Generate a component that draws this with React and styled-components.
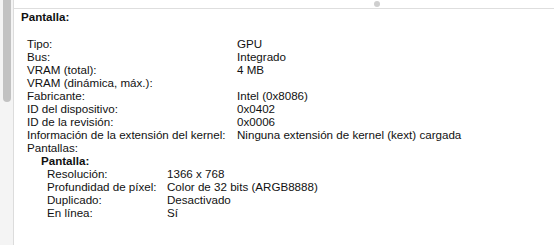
import React from "react";
import styled, { createGlobalStyle } from "styled-components";

const Global = createGlobalStyle`
  html, body { margin: 0; padding: 0; background: #fff; }
  body { font-family: "Liberation Sans", Arial, sans-serif; }
`;

const Frame = styled.div`
  display: flex;
  width: 554px;
  height: 245px;
  overflow: hidden;
  background: #fff;
`;

const Gutter = styled.div`
  width: 14px;
  flex-shrink: 0;
  background: #f4f4f4;
  border-right: 1px solid #dcdcdc;
  padding: 0 3px 0 3px;
  box-sizing: border-box;
`;

const Thumb = styled.div`
  width: 8px;
  height: 102px;
  background: #c2c2c2;
  border-radius: 0 0 4px 4px;
`;

const Main = styled.div`
  flex: 1;
  display: flex;
  flex-direction: column;
`;

const Splitter = styled.div`
  height: 9px;
  flex-shrink: 0;
  border-bottom: 1px solid #dedede;
  display: flex;
  padding-left: 360px;
  box-sizing: border-box;
`;

const Dot = styled.div`
  width: 6px;
  height: 6px;
  margin-top: 1px;
  border-radius: 50%;
  background: #cfcfcf;
`;

const Content = styled.div`
  padding: 1px 0 0 7px;
  color: #111;
  font-size: 11.6px;
  line-height: 13px;
`;

const Title = styled.div`
  font-weight: bold;
  margin-bottom: 14px;
`;

const Table = styled.div`
  display: grid;
  grid-template-columns: ${p => p.$label}px auto;
  padding-left: ${p => p.$indent}px;
`;

const Label = styled.div`
  white-space: nowrap;
`;

const Value = styled.div`
  white-space: nowrap;
`;

const Heading = styled.div`
  grid-column: 1 / -1;
  font-weight: ${p => (p.$bold ? "bold" : "normal")};
  padding-left: ${p => p.$indent || 0}px;
`;

const main = [
  ["Tipo:", "GPU"],
  ["Bus:", "Integrado"],
  ["VRAM (total):", "4 MB"],
  ["VRAM (dinámica, máx.):", ""],
  ["Fabricante:", "Intel (0x8086)"],
  ["ID del dispositivo:", "0x0402"],
  ["ID de la revisión:", "0x0006"],
  ["Información de la extensión del kernel:", "Ninguna extensión de kernel (kext) cargada"],
];

const screen = [
  ["Resolución:", "1366 x 768"],
  ["Profundidad de píxel:", "Color de 32 bits (ARGB8888)"],
  ["Duplicado:", "Desactivado"],
  ["En línea:", "Sí"],
];

export default function App() {
  return (
    <Frame>
      <Global />
      <Gutter>
        <Thumb />
      </Gutter>
      <Main>
        <Splitter>
          <Dot />
        </Splitter>
        <Content>
          <Title>Pantalla:</Title>
          <Table $label={210} $indent={6}>
            {main.map(([k, v]) => (
              <React.Fragment key={k}>
                <Label>{k}</Label>
                <Value>{v}</Value>
              </React.Fragment>
            ))}
            <Heading>Pantallas:</Heading>
            <Heading $bold $indent={14}>Pantalla:</Heading>
          </Table>
          <Table $label={120} $indent={26}>
            {screen.map(([k, v]) => (
              <React.Fragment key={k}>
                <Label>{k}</Label>
                <Value>{v}</Value>
              </React.Fragment>
            ))}
          </Table>
        </Content>
      </Main>
    </Frame>
  );
}
